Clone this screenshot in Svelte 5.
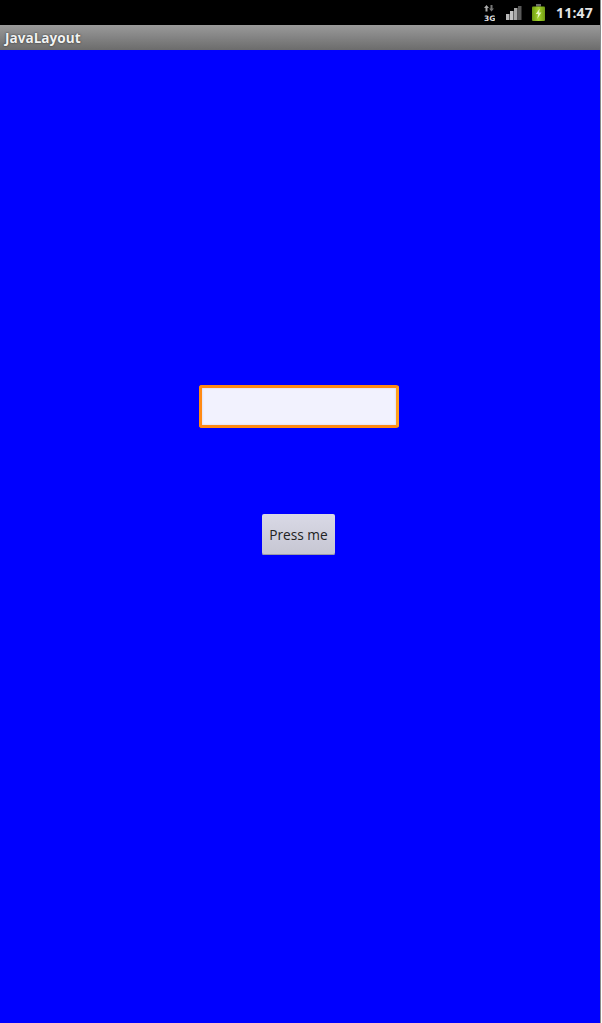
<script lang="ts">
  // signal strength bars: three lit, last one dim
  const bars = [
    { x: 0, h: 6, fill: "#b8b8b8" },
    { x: 4, h: 9, fill: "#c4c4c4" },
    { x: 8, h: 12, fill: "#a8a8a8" },
    { x: 12, h: 14, fill: "#5a5a5a" },
  ];
</script>

<div class="device">
  <header class="status-bar">
    <svg class="net" width="11" height="16" viewBox="0 0 11 16" aria-hidden="true">
      <path d="M2.5 0 L5 3 L3.5 3 L3.5 6.5 L1.5 6.5 L1.5 3 L0 3 Z" fill="#aaa" />
      <path d="M7.5 6.5 L5 3.5 L6.5 3.5 L6.5 0 L8.5 0 L8.5 3.5 L10 3.5 Z" fill="#777" />
      <text x="0" y="15.5" class="net-label">3G</text>
    </svg>
    <svg class="signal" width="16" height="14" viewBox="0 0 16 14" aria-hidden="true">
      {#each bars as bar}
        <rect x={bar.x} y={14 - bar.h} width="3.5" height={bar.h} fill={bar.fill} />
      {/each}
    </svg>
    <svg class="battery" width="13" height="17" viewBox="0 0 13 17" aria-hidden="true">
      <defs>
        <linearGradient id="cell" x1="0" y1="0" x2="1" y2="0">
          <stop offset="0" stop-color="#6f9a12" />
          <stop offset="0.5" stop-color="#a4d42c" />
          <stop offset="1" stop-color="#6f9a12" />
        </linearGradient>
      </defs>
      <rect x="4" y="0" width="5" height="2.5" fill="#6a6a6a" />
      <rect x="0" y="2.5" width="13" height="14.5" rx="1" fill="url(#cell)" />
      <path d="M7.8 4.5 L3.8 10 L6.2 10 L5.2 15 L9.4 8.4 L7 8.4 Z" fill="#e6f4c0" />
    </svg>
    <span class="clock">11:47</span>
  </header>

  <div class="title-bar">JavaLayout</div>

  <main class="content">
    <div class="text-field"></div>
    <button class="press" type="button">Press me</button>
  </main>
</div>

<style>
  :global(body) {
    background: #fff;
    overflow: hidden;
  }
  .device {
    width: 600px;
    height: 1023px;
    display: flex;
    flex-direction: column;
    font-family: "Open Sans", "DejaVu Sans", sans-serif;
    border-right: 1px solid #8a8a8a;
  }
  .status-bar {
    height: 25px;
    flex: none;
    background: #000;
    display: flex;
    align-items: center;
    justify-content: flex-end;
    padding-right: 7px;
  }
  .net {
    margin-right: 11px;
  }
  .net-label {
    font-family: "DejaVu Sans", sans-serif;
    font-size: 7.5px;
    font-weight: 700;
    fill: #ddd;
  }
  .signal {
    margin-right: 10px;
  }
  .battery {
    margin-right: 11px;
  }
  .clock {
    color: #e4e4e4;
    font-size: 14px;
    font-weight: 700;
    letter-spacing: 0.2px;
  }
  .title-bar {
    height: 25px;
    flex: none;
    box-sizing: border-box;
    padding-left: 5px;
    line-height: 25px;
    background: linear-gradient(#9a9a9a, #6c6c6c);
    color: #f2f2f2;
    font-size: 13.6px;
    font-weight: 700;
    text-shadow: 0 0 2px #222;
  }
  .content {
    flex: 1;
    background: #0000ff;
    display: flex;
    flex-direction: column;
    align-items: center;
    padding-top: 335px;
    padding-right: 2px;
    gap: 86px;
  }
  .text-field {
    width: 200px;
    height: 43px;
    box-sizing: border-box;
    border: 3px solid #ff8a14;
    border-right-color: #ffa01e;
    border-radius: 3px;
    background: #f2f2fe;
    box-shadow: inset 0 0 2px #c8c8e0;
  }
  .press {
    width: 73px;
    height: 41px;
    margin-right: 1px;
    padding: 0 0 1px;
    border: none;
    border-radius: 2px;
    background: linear-gradient(#d9d9e6, #c6c6d2);
    box-shadow: inset 0 -1px 0 #9a9aa8;
    color: #222;
    font-family: "Open Sans", "DejaVu Sans", sans-serif;
    font-size: 13.7px;
  }
</style>
